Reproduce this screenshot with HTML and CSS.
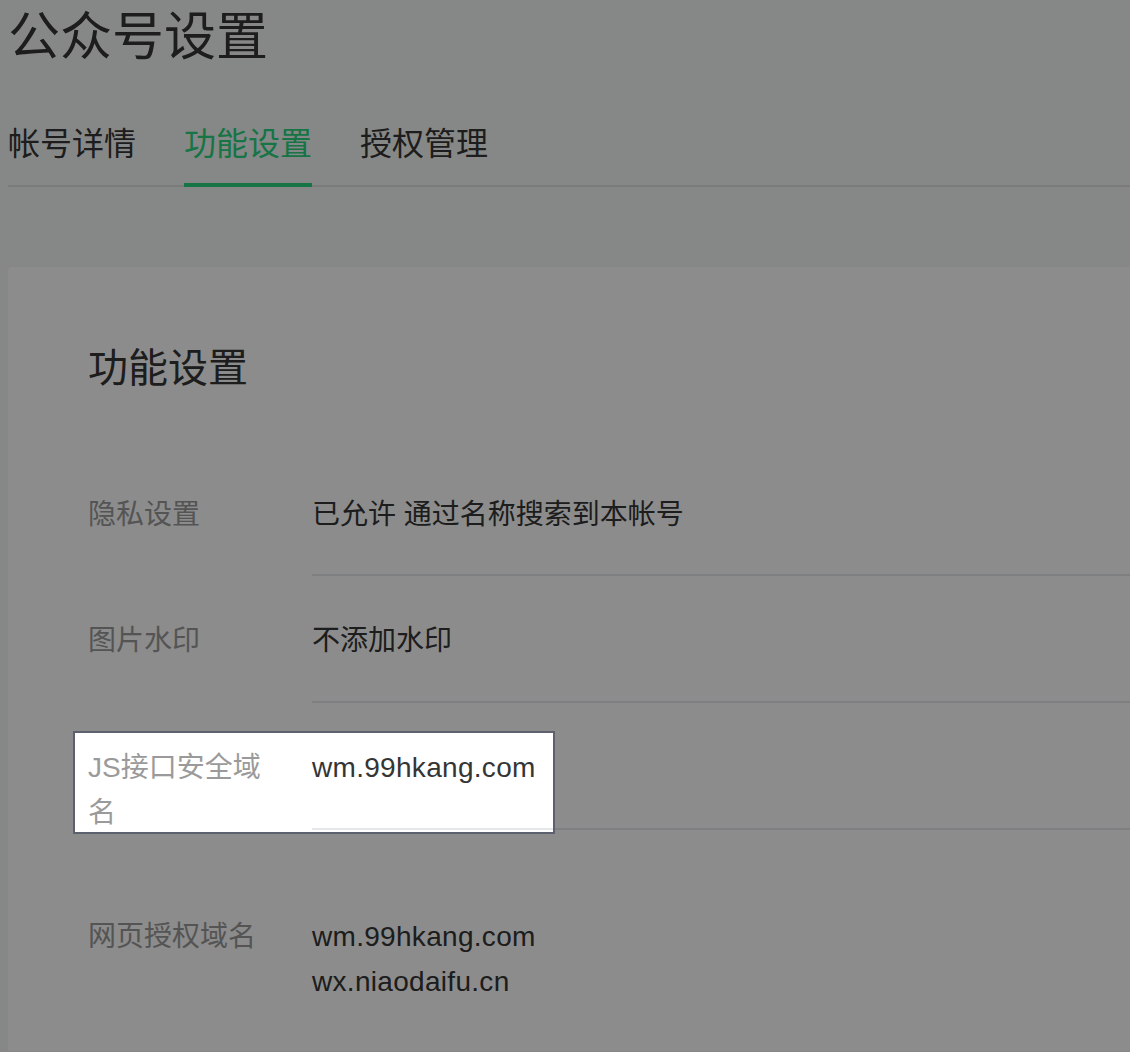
FILE: index.html
```html
<!DOCTYPE html>
<html lang="zh-CN">
<head>
<meta charset="utf-8">
<title>公众号设置</title>
<link rel="stylesheet" href="styles.css">
</head>
<body>
<div class="page">
  <h1 class="page-title">公众号设置</h1>
  <nav class="tabs">
    <a class="tab">帐号详情</a>
    <a class="tab tab-active">功能设置</a>
    <a class="tab">授权管理</a>
  </nav>
  <section class="card">
    <h2 class="card-title">功能设置</h2>
    <div class="setting">
      <div class="setting-label">隐私设置</div>
      <div class="setting-value">已允许 通过名称搜索到本帐号</div>
    </div>
    <div class="setting">
      <div class="setting-label">图片水印</div>
      <div class="setting-value">不添加水印</div>
    </div>
    <div class="setting">
      <div class="setting-label">JS接口安全域名</div>
      <div class="setting-value"><span class="domain">wm.99hkang.com</span></div>
    </div>
    <div class="setting setting-spaced">
      <div class="setting-label">网页授权域名</div>
      <div class="setting-value setting-value-plain">
        <div class="domain">wm.99hkang.com</div>
        <div class="domain">wx.niaodaifu.cn</div>
      </div>
    </div>
  </section>
</div>
<div class="spotlight"></div>
</body>
</html>
```
FILE: styles.css
```css
html {
  background: #f5f7f6;
}
body {
  margin: 8px 0 0 8px;
  font-family: "Liberation Sans", "Noto Sans CJK SC", sans-serif;
  color: #353535;
}
.page-title {
  margin: 3px 0 0;
  font-size: 52px;
  line-height: 52px;
  font-weight: normal;
}
.tabs {
  display: flex;
  gap: 48px;
  margin-top: 65px;
  border-bottom: 2px solid #e1e1e1;
}
.tab {
  font-size: 32px;
  line-height: 32px;
  padding-bottom: 23px;
  border-bottom: 4px solid transparent;
  margin-bottom: -2px;
  color: #353535;
}
.tab-active {
  color: #28d47e;
  border-bottom-color: #28d47e;
}
.card {
  margin-top: 80px;
  background: #fff;
  border-radius: 4px 0 0 0;
  padding: 80.5px 0 10px 80px;
}
.card-title {
  margin: 0 0 62px;
  font-size: 40px;
  line-height: 40px;
  font-weight: normal;
}
.setting {
  display: grid;
  grid-template-columns: 224px 1fr;
  font-size: 28px;
  line-height: 44.8px;
}
.setting-label {
  color: #9a9a9a;
  padding: 43px 30px 0 0;
  margin-bottom: -8px;
}
.setting-value {
  padding: 43px 0 37px;
  border-bottom: 2px solid #e4e8eb;
}
.setting-spaced {
  margin-top: 42px;
}
.setting-value-plain {
  border-bottom: none;
}
.domain {
  letter-spacing: 0.3px;
}
.spotlight {
  position: absolute;
  left: 73px;
  top: 731px;
  width: 478px;
  height: 99px;
  border: 2px solid #5d616e;
  box-shadow: 0 0 0 3000px rgba(0, 0, 0, 0.45);
}
```
